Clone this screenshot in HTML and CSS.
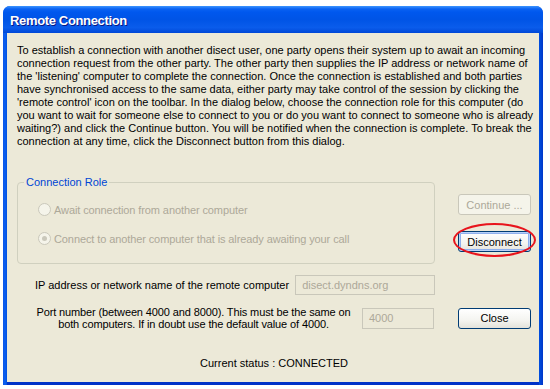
FILE: index.html
```html
<!DOCTYPE html>
<html>
<head>
<meta charset="utf-8">
<link rel="stylesheet" href="styles.css">
</head>
<body>
<div class="window">
  <div class="titlebar"><span class="title">Remote Connection</span></div>
  <div class="content">
    <p class="intro">To establish a connection with another disect user, one party opens their system up to await an incoming<br>connection request from the other party. The other party then supplies the IP address or network name of<br>the 'listening' computer to complete the connection. Once the connection is established and both parties<br>have synchronised access to the same data, either party may take control of the session by clicking the<br>'remote control' icon on the toolbar. In the dialog below, choose the connection role for this computer (do<br>you want to wait for someone else to connect to you or do you want to connect to someone who is already<br>waiting?) and click the Continue button. You will be notified when the connection is complete. To break the<br>connection at any time, click the Disconnect button from this dialog.</p>
    <div class="main">
      <fieldset class="group">
        <legend class="legend">Connection Role</legend>
        <div class="radio-row first"><span class="radio"></span><span class="radio-label">Await connection from another computer</span></div>
        <div class="radio-row"><span class="radio checked"></span><span class="radio-label">Connect to another computer that is already awaiting your call</span></div>
      </fieldset>
      <div class="buttons">
        <div class="btn disabled">Continue ...</div>
        <div class="btn-wrap">
          <div class="btn default">Disconnect</div>
          <div class="ring"></div>
        </div>
      </div>
    </div>
    <div class="ip-row">
      <span class="ip-label">IP address or network name of the remote computer</span>
      <div class="field ip-field">disect.dyndns.org</div>
    </div>
    <div class="port-row">
      <span class="port-label">Port number (between 4000 and 8000). This must be the same on<br>both computers. If in doubt use the default value of 4000.</span>
      <div class="field port-field">4000</div>
      <div class="btn close">Close</div>
    </div>
    <div class="status">Current status : CONNECTED</div>
  </div>
</div>
</body>
</html>
```
FILE: styles.css
```css
html, body {
  margin: 0;
  padding: 0;
  background: #ffffff;
}
body {
  font-family: "Liberation Sans", Arial, sans-serif;
  font-size: 11px;
  color: #000;
}
.window {
  margin: 6px 0 0 3px;
  width: 540px;
  height: 379px;
  box-sizing: border-box;
  border-radius: 7px 7px 0 0;
  display: flex;
  flex-direction: column;
  padding: 0 4px 3px 4px;
  background: linear-gradient(to right, #0a55e8 0, #0a5ff0 2px, #0050e0 4px, #0050e0 calc(100% - 4px), #0036c8 100%);
}
.titlebar {
  height: 27px;
  margin: 0 -4px;
  border-radius: 7px 7px 0 0;
  background: linear-gradient(to bottom, #3d95ff 0, #0a62f2 3px, #0058ee 6px, #0054e6 50%, #0a5ceb 80%, #0048d8 100%);
  display: flex;
  align-items: center;
  padding-left: 7px;
  box-sizing: border-box;
}
.title {
  color: #fff;
  font-weight: bold;
  font-size: 13px;
  letter-spacing: -0.35px;
  text-shadow: 1px 1px 0 #0a1883;
  position: relative;
  top: 1px;
}
.content {
  flex: 1;
  background: #ece9d8;
  padding: 11px 8px 0 10px;
  box-shadow: 0 3px 0 #0032c8;
}
.intro {
  margin: 0;
  line-height: 13px;
  white-space: nowrap;
}
.main {
  display: flex;
  margin-top: 28px;
}
.group {
  margin: 0;
  width: 418px;
  height: 88px;
  box-sizing: border-box;
  border: 1px solid #d0d0bf;
  border-radius: 4px;
  padding: 0;
}
.legend {
  color: #0046d5;
  padding: 0 2px;
  margin-left: 6px;
  line-height: 13px;
}
.radio-row {
  display: flex;
  align-items: center;
  gap: 3px;
  height: 13px;
  margin-top: 16px;
  padding-left: 20px;
}
.radio-row.first {
  margin-top: 14px;
}
.radio {
  width: 13px;
  height: 13px;
  box-sizing: border-box;
  border: 1px solid #cac8bb;
  border-radius: 50%;
  background: #f5f4ea;
  display: flex;
  align-items: center;
  justify-content: center;
}
.radio.checked::after {
  content: "";
  width: 5px;
  height: 5px;
  border-radius: 50%;
  background: #cac8bb;
}
.radio-label {
  color: #aca899;
  letter-spacing: -0.1px;
}
.buttons {
  margin-left: auto;
  display: flex;
  flex-direction: column;
  padding-top: 18px;
  gap: 16px;
}
.btn {
  width: 73px;
  height: 21px;
  box-sizing: border-box;
  border: 1px solid #003c74;
  border-radius: 3px;
  background: linear-gradient(to bottom, #ffffff 0, #f4f4f0 60%, #e3e2da 100%);
  display: flex;
  align-items: center;
  justify-content: center;
}
.btn.disabled {
  border-color: #c9c7ba;
  background: #f5f4ea;
  color: #aca899;
}
.btn.default {
  box-shadow: inset 0 0 0 1px #b8d0f8, inset 0 0 0 2px #8fb0ee;
}
.btn-wrap {
  position: relative;
}
.ring {
  position: absolute;
  left: -5px;
  top: -8px;
  width: 83px;
  height: 34px;
  box-sizing: border-box;
  border: 2px solid #e8141c;
  border-radius: 50%;
}
.ip-row {
  display: flex;
  align-items: center;
  margin-top: 11px;
  padding-left: 18px;
}
.field {
  height: 20px;
  box-sizing: border-box;
  border: 1px solid #c9c7ba;
  color: #aca899;
  display: flex;
  align-items: center;
  padding-left: 6px;
}
.ip-field {
  width: 140px;
  margin-left: 6px;
}
.port-row {
  display: flex;
  align-items: center;
  margin-top: 11px;
  padding-left: 19px;
}
.port-label {
  width: 315px;
  text-align: center;
  line-height: 12px;
  letter-spacing: -0.12px;
  white-space: nowrap;
}
.port-field {
  width: 72px;
  height: 21px;
  margin-left: 11px;
}
.btn.close {
  margin-left: auto;
}
.status {
  margin-top: 27px;
  text-align: center;
  line-height: 13px;
}
```
